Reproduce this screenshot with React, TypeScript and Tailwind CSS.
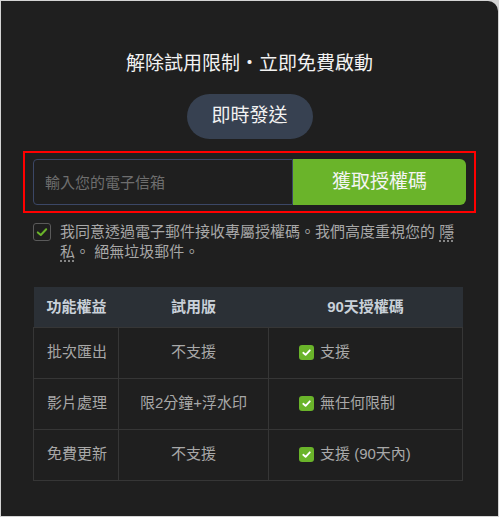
import { useState } from "react";

const font = { fontFamily: '"Liberation Sans", "Noto Sans CJK TC", sans-serif' };

function GreenCheck() {
  return (
    <span className="w-[15px] h-[15px] rounded-[3px] bg-[#6ab42a] flex items-center justify-center shrink-0">
      <svg width="11" height="11" viewBox="0 0 12 12" fill="none">
        <path d="M2.5 6.3 L5 8.6 L9.6 3.6" stroke="#fff" strokeWidth="2" strokeLinecap="round" strokeLinejoin="round" />
      </svg>
    </span>
  );
}

const rows = [
  { name: "批次匯出", trial: "不支援", full: "支援" },
  { name: "影片處理", trial: "限2分鐘+浮水印", full: "無任何限制" },
  { name: "免費更新", trial: "不支援", full: "支援 (90天內)" },
];

export default function App() {
  const [agree, setAgree] = useState(true);

  return (
    <div className="w-[499px] h-[517px] bg-[#d4d4d4] p-px" style={font}>
      <div className="h-full bg-[#1f1f1f] rounded-tr-[10px] px-[22px]">
        <h1 className="pt-[49px] text-center text-[19px] leading-[28px] text-[#f2f2f2]">
          解除試用限制・立即免費啟動
        </h1>

        <div className="mt-[16px] flex justify-center">
          <button className="w-[126px] h-[45px] rounded-full bg-[#374151] text-[19px] text-[#f2f2f2]">
            即時發送
          </button>
        </div>

        <div className="mt-[12px] border-2 border-[#ff0000] px-2 py-[6px] flex">
          <input
            className="w-[260px] h-[46px] bg-[#1f1f1f] border border-[#3b4766] rounded-l-[4px] px-[11px] text-[15px] text-[#ddd] placeholder:text-[#6e6e6e] outline-none"
            placeholder="輸入您的電子信箱"
          />
          <button className="flex-1 h-[46px] bg-[#6ab42a] rounded-r-[6px] text-[19px] text-[#f4f4f4]">
            獲取授權碼
          </button>
        </div>

        <label className="mt-[9px] ml-[10px] flex gap-[9px] items-start cursor-pointer">
          <span
            onClick={() => setAgree(!agree)}
            className="w-[18px] h-[18px] mt-px rounded-[3px] border border-[#5a5a5a] flex items-center justify-center shrink-0"
          >
            {agree && (
              <svg width="12" height="12" viewBox="0 0 12 12" fill="none">
                <path d="M1.8 6.4 L4.8 9 L10.2 3.2" stroke="#6ab42a" strokeWidth="2" strokeLinecap="round" strokeLinejoin="round" />
              </svg>
            )}
          </span>
          <p className="w-[404px] text-[15px] leading-[20px] text-[#a8a8a8]">
            我同意透過電子郵件接收專屬授權碼。我們高度重視您的{" "}
            <span className="underline decoration-dotted underline-offset-[4px]">隱私</span>。 絕無垃圾郵件。
          </p>
        </label>

        <table className="mt-[25px] ml-[10px] w-[430px] border-collapse text-[15px]">
          <thead>
            <tr className="h-[40px] bg-[#2b3036] text-[#c9d1d9] font-bold">
              <th className="w-[85px] pl-[13px] text-left font-bold">功能權益</th>
              <th className="w-[150px] text-center font-bold">試用版</th>
              <th className="text-center font-bold">90天授權碼</th>
            </tr>
          </thead>
          <tbody className="text-[#a8a8a8]">
            {rows.map((r) => (
              <tr key={r.name} className="h-[51px]">
                <td className="border border-[#363636] pl-[13px]">{r.name}</td>
                <td className="border border-[#363636] text-center">{r.trial}</td>
                <td className="border border-[#363636] pl-[30px]">
                  <div className="flex items-center gap-[6px]">
                    <GreenCheck />
                    <span>{r.full}</span>
                  </div>
                </td>
              </tr>
            ))}
          </tbody>
        </table>
      </div>
    </div>
  );
}
